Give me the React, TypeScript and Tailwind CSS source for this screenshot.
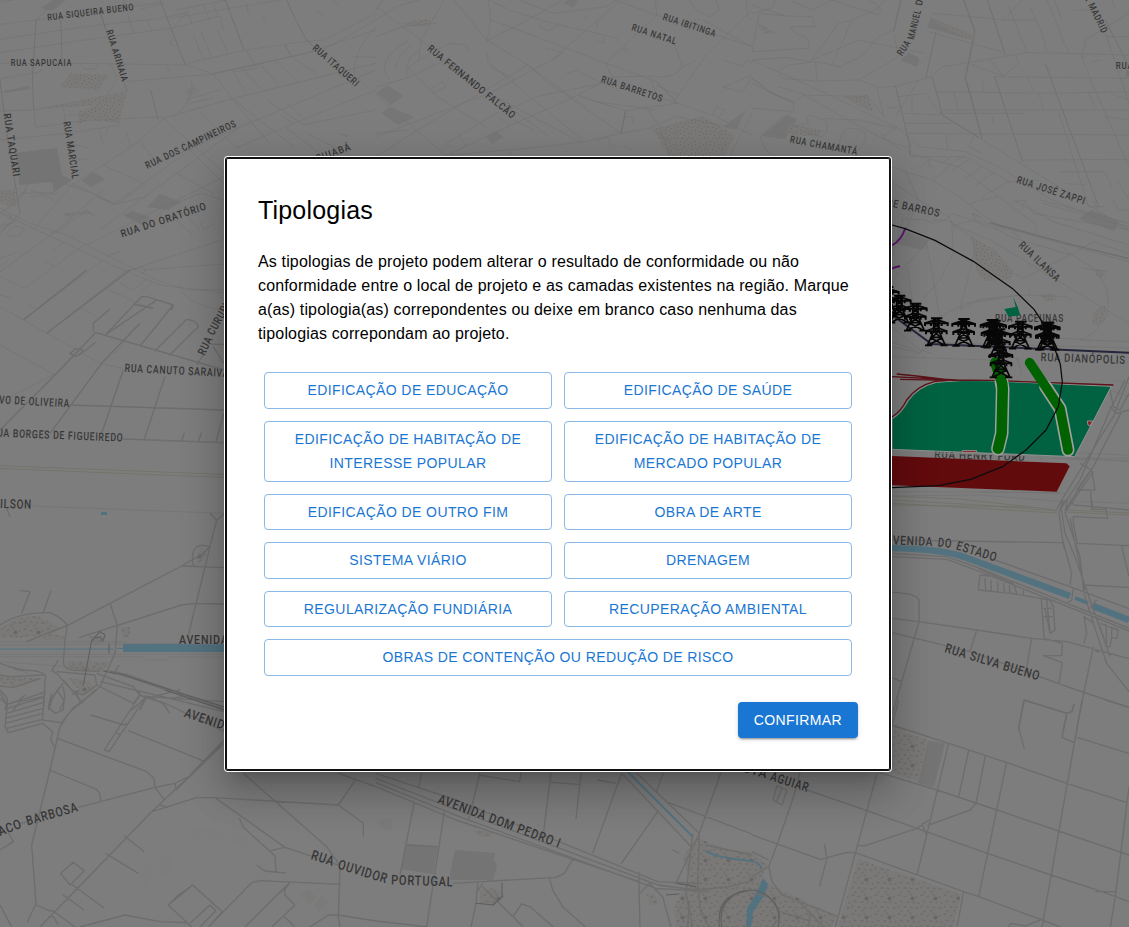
import React from "react";

type Sector = { x: number; y: number; thin?: string; road?: string; bold?: string };

/* Street geometry, drawn per map tile at three units to the pixel. */
const sectors: Sector[] = [
  {
    x: 0,
    y: 0,
    thin:
      "M0 73L108 60L300 34L480 8 M108 60L172 0 M0 118L240 82L480 55L560 38 M0 158L220 125L400 100L520 84L660 48 M0 190L240 190L560 195L640 222L960 150 M0 236L110 218L130 210 M0 333L105 330L380 275 M380 245L640 222 M320 190L340 205L350 240L322 283 M240 190L256 208L290 206L292 192 M105 330L103 360L108 382L250 362L490 350 M0 420L200 400L360 375 M190 320L200 400L212 430L264 444 M200 345L270 345 M208 476L262 478 M298 390L310 433 M326 382L318 404 M380 400L392 440 M420 422L490 355L700 295L1128 190 M0 5L40 0 M370 0L402 102 M440 60L456 94 M415 30L490 10 M300 34L318 92 M520 84L560 38 M515 115L510 132L522 138 M500 195L510 215 M530 30L680 0 M560 30L575 70 M610 15L628 62 M640 10L655 50 M510 55L900 -10 M580 105L612 180 M604 96L634 170 M652 88L684 160 M660 48L670 88 M560 190L740 150L910 125 M640 220L900 165L1128 90 M640 222L760 375L810 430 M696 212L738 276 M730 206L782 266 M780 192L836 254 M828 184L896 248 M880 174L950 220 M575 242Q585 290 540 335L520 355 M560 298L660 270 M565 310L640 294 M575 330L600 320 M490 355L720 560 M600 335L710 444 M696 295L880 440 M740 150L770 205L700 215 M420 422L470 490 M470 490L700 390L1128 210 M310 495L420 422 M310 495L430 550 M530 520L720 380 M640 580L530 520 M530 520L298 690 M560 440L680 560 M800 300L910 374 M860 310L910 352 M840 345L880 370 M710 444L870 375L1128 270 M860 385L960 460 M920 400L1050 465 M910 374L1128 330 M950 30L970 52 M1000 0L1020 20 M910 125L970 120L1128 40 M970 150L1128 60 M1128 80Q1060 150 1062 220L1100 260 M1060 170L1128 172 M790 50L796 70 M740 10L745 40 M900 -10L1128 -20 M160 540L280 580L340 612L430 550L640 400 M0 640L60 600L90 540L160 540 M60 580L160 578 M90 590Q140 580 165 605 M100 690L210 560L310 495 M215 550L345 612L440 590 M190 640L215 650L200 670 M200 640L275 640 M240 650L260 630L285 650 M430 690L500 620L600 580L672 600 M560 650L600 690 M0 680L35 650L10 640 M0 690L50 660",
    road:
      "M108 60L104 130L97 240L101 330 M182 40L186 180 M300 34L345 170L382 275 M480 0L556 195 M676 0L732 150 M452 270L474 358 M860 0L885 55L918 118L945 145 M0 240L20 400L60 640L0 700 M855 135L875 170",
  },
  {
    x: 376,
    y: 0,
    thin:
      "M0 20L140 125L232 205L455 362L520 410 M205 0L135 120L128 180L95 205L185 290L335 385 M234 0L330 118L455 195L630 322 M340 0L400 30L530 70L728 115 M345 60L440 95L690 190L842 245 M336 0Q352 60 332 122 M332 122L455 60L560 0 M128 180L220 130L272 135L280 160 M0 110L80 80L180 70 M0 60L60 20L130 0 M20 0L0 30 M0 260L92 235L220 175 M92 235Q85 170 130 150 M40 240Q-5 180 96 122 M60 210Q60 160 110 135 M430 0L530 40L690 20L720 0L840 45L1128 140 M530 178L728 5 M530 178L480 205L340 280L0 410 M500 65L490 82L520 93L550 70 M620 60L640 45 M660 85L665 65 M690 190L842 45L838 0 M690 190L700 215L710 232L820 228Q900 240 920 200L890 120 M680 110L685 130L665 120 M510 145L560 158L530 180 M570 220L605 210L640 232L730 270 M710 232L585 295L340 405L165 490 M820 228L845 290L905 310 M890 310L990 165L1128 30 M905 310L1020 350L1128 405 M610 285L660 305L840 330 M840 255L905 285 M610 290L750 332L900 310 M750 332L735 400L625 425L455 445L220 465 M735 400L520 250L455 195L380 240L140 380L0 470 M735 400L820 385L900 350L1060 380 M808 318L848 375L880 460 M820 385L880 425 M748 332L745 352L768 350L770 368 M335 158L335 185L480 305L625 425 M0 285L340 580 M340 200L420 240 M92 390L0 400 M160 270L200 245L210 260L170 280 M380 340L480 290L580 270L680 250 M365 350L400 375 M465 345L500 370 M415 362L475 390 M340 280L620 430 M210 430L370 335 M245 400L270 440 M400 455L420 480 M660 425L695 410L705 440 M740 440L770 450 M920 200L960 182 M1020 0L1030 30L1000 50L960 30L940 0 M1110 0L1115 50L1128 60 M1040 180L1100 200L1110 180L1128 190 M980 60L1128 140 M960 60L930 95 M1128 230L1100 275L1040 262L1128 225 M1010 345L1020 320L1045 330L1030 352 M1128 340L1060 470",
    road: "M735 400L748 335 M905 310L842 245",
  },
  {
    x: 752,
    y: 0,
    thin:
      "M0 15L100 48L180 50L190 80L115 80L130 100Q180 110 170 145L0 155 M0 155L22 40L100 48 M70 0L60 25L0 40 M115 0L180 30L240 0L380 45Q400 20 350 0 M178 180L260 70L300 60 M240 195L300 60L370 30L400 0 M180 180L320 120L520 160 M445 0L425 90L380 110L335 165L265 200L190 185L110 195Q70 210 90 235L190 243L320 240L440 170L425 100 M190 185L196 243 M0 180L100 172L178 185 M320 240L380 262L430 260L540 230L570 200L650 188L820 158L930 160L1131 165 M0 250L125 310L158 285L270 350L400 420L470 445 M80 260L158 285L350 290L395 350L375 265 M125 310L125 335L0 325 M0 180L200 270L440 385L500 440L640 455L740 500L900 600L1131 690 M125 335L85 355L25 410L40 450L100 490 M160 340L170 370L110 380 M170 345L220 360Q235 390 210 410L170 400 M220 355L320 360L430 385L390 410 M390 410L450 450 M260 440Q270 380 300 385Q370 390 320 450 M540 40L660 50L753 60L850 60 M530 95L750 155 M635 0L670 100L640 235L690 415 M510 190L460 150 M440 290L520 280L565 340L820 340 M460 340L565 345 M460 370L600 370 M480 290L480 330 M405 325L440 320 M470 400L1131 405 M550 275L880 280L1131 275 M570 330L1131 330 M605 275L618 330 M650 190L690 205L755 228L800 190L790 165 M710 175L755 228 M690 235L695 275 M728 230L1131 235 M720 350L725 375 M580 400L588 450 M670 400L650 440L690 460 M570 345L1131 690 M810 480L1131 478 M920 515L1060 515 M1000 555L940 550 M825 230L845 275 M860 280L875 330 M920 335L1010 620L1060 620 M753 60L850 -40 M770 20L825 158 M835 20L870 100L885 158 M885 0L950 160 M900 -20L930 60 M963 30L1030 30 M1010 165L990 175L1000 120L1131 40 M985 160L1020 250L1131 500 M1020 185L1050 180 M1060 110L1131 110 M1060 100L1131 310 M1010 275L1030 330 M1060 350L1131 360 M1075 280L1131 300 M1060 520L1080 560 M1095 540L1131 600 M1080 0L1090 30 M460 515L540 540L620 590L700 650L760 690 M420 545L500 600L590 650L610 690 M470 450L475 470L640 470L770 545L860 540 M500 505L530 480L535 505 M545 540L610 480L640 470 M570 490L600 470 M600 510L650 480 M640 535L690 500 M670 555L730 515 M690 590L770 545 M740 590L690 600L650 612 M470 460L620 500L740 590L860 680 M790 605L820 600L810 625 M870 610L1131 680 M420 500L460 515L500 600L460 690 M540 660L580 660L600 640L740 690 M670 655L660 640L690 655 M500 240L430 350",
    road:
      "M552 95L522 232 M430 256L474 440 M540 230L560 300L570 345L680 412 M728 230L812 485 M635 0L668 90L640 235L660 300L690 415 M0 235L60 280L125 305 M880 190L920 300L1040 620 M706 0L760 165 M450 -10L425 95 M1131 200L1060 60 M474 430L474 462",
  },
  {
    x: 880,
    y: 200,
    thin:
      "M80 60L100 10 M36 170L70 55L130 60L160 70L200 60L225 75L285 60L747 185 M225 75L330 120L747 370 M285 60L280 40L300 50 M215 60L220 160L180 240L100 330 M140 130L180 350L260 310L420 285L560 290L580 305 M140 130L36 240 M80 200L100 320 M220 75L275 110L285 150L240 330 M340 80L390 110L570 165L430 235L400 220L380 205 M390 95L420 110 M570 160L640 205Q700 260 680 350L640 400L600 420L747 425 M400 0L520 65L747 135 M440 10L460 40L747 90 M480 0L747 70 M470 85L460 105 M450 262L445 285 M640 0L655 35 M700 0L715 30L747 30 M610 205L660 210L680 240 M550 140L570 165L640 125L747 160 M500 280L530 290 M36 380L120 450L160 462 M130 440L120 462 M240 330L290 300L420 285 M540 415L640 420 M30 470L330 480",
    road: "M747 176L560 130L330 68",
  },
  {
    x: 880,
    y: 340,
    thin:
      "M36 20L120 38L160 8L747 24 M36 8L100 25 M120 38L100 48 M410 50L420 80L425 105 M400 55L420 58 M690 150L747 170 M36 455L540 458 M36 468L300 465L550 485 M700 120L747 130 M560 350L747 365 M0 310L747 346 M480 350L484 362 M510 355L747 355 M560 358L747 362 M570 470L590 485L747 490 M300 455L560 460",
    road:
      "M747 110L700 230L545 480L530 510 M735 120L690 210L600 420L540 510 M690 150L700 200L720 210L747 160 M725 215L640 380L555 510 M600 370L635 390L645 450L590 450L640 380 M632 455L635 510 M690 200L710 220L747 210 M640 395L560 510",
  },
  {
    x: 880,
    y: 500,
    road:
      "M555 0L543 20L555 100L585 170L630 300L690 470 M562 0L555 40L600 170L612 280L640 370L680 490L747 575 M548 0L537 40L548 120L575 220L570 255 M570 55L615 270 M580 70L580 50L683 55L678 28L640 28L635 0 M570 0L582 15L640 20L747 30 M580 70L592 130L747 137 M36 120L548 128L555 150 M725 137L747 230 M612 255L747 262 M36 160L200 170L300 205L747 385 M36 170L200 178L300 215L747 393 M345 180L570 260L747 326 M300 225L295 270L395 280L480 295L510 300L520 320L525 390L510 400L495 325 M300 225L350 230L400 250L412 285 M315 235L317 270 M333 240L334 272 M352 245L354 276 M370 250L374 278 M388 255L390 280 M295 205L350 230 M430 270L430 285 M484 295L492 415L547 430L545 467L490 467L547 488L536 555 M490 325L515 325 M490 350L518 350 M500 300L510 395 M36 277Q110 280 117 300L117 365 M36 355L117 365L290 390L455 415L560 425L747 476 M36 398L270 455L590 570L747 622 M117 365L65 545L36 645 M290 390L270 455 M455 415L436 525 M640 440L612 575L590 690 M36 533L65 545 M612 430L620 400L612 350L640 370 M660 370L715 390L710 415L695 412L690 440L680 440L660 380 M678 373L680 435 M695 385L695 412 M415 690L433 600L560 640L550 690 M560 640L575 635L582 612 M36 678L80 690 M580 265L575 300L560 310 M650 300L630 325 M645 452L657 457",
  },
  {
    x: 0,
    y: 190,
    thin:
      "M0 55L90 100L200 135L470 270L560 300L672 298 M0 70L100 115L380 245L480 285L672 308 M0 110L40 95L30 80 M20 130L45 108L75 115L55 140L20 135 M0 205L45 190 M0 230L25 210 M90 0L140 15L180 10 M80 0L0 70 M0 245L160 130L310 0 M260 165L672 -40 M70 390L310 210 M75 295L250 165 M140 430L380 240 M160 180L195 155 M130 215L165 228 M210 145L225 130 M320 200L360 183 M380 245L430 230L435 245L425 250 M430 240L672 222 M390 240L672 148 M360 280L400 300L440 268 M420 307L455 280 M315 295L450 355L470 330 M550 305Q560 340 672 362 M0 350L300 520L370 535 M0 465L165 555 M80 340L110 357 M240 352L290 380 M290 20L345 45L440 -20 M190 70L205 80L190 95 M195 75L225 75 M150 128L170 128L255 62L285 78 M530 90L560 120L578 130 M600 95L610 118L645 100 M0 260L75 295 M0 315L35 325 M0 640L30 620L160 555 M345 490L370 465",
    road:
      "M70 390L260 240 M140 430L390 240 M318 433L425 320L440 320L520 345L420 468 M400 342L460 355 M520 345L515 360 M465 482L560 388Q590 390 595 410L507 497 M280 425L280 400L330 357 M285 427L672 540 M318 433L470 330 M0 720L165 555L285 430 M150 730L305 520L420 400 M305 730L370 540 M432 750L495 560 M545 753L553 728 M596 755L604 727 M648 755L672 670 M208 645L672 660 M370 747L672 758 M250 487L287 457 M210 490L230 475L248 480L245 490L225 500Z M590 525L610 495 M635 463L672 463 M672 520L640 470",
  },
  {
    x: 0,
    y: 440,
    thin:
      "M0 605L380 605 M0 615L540 610 M0 643L672 643 M0 650L430 650L440 660L500 660L508 650L672 652 M0 665L200 680L330 693 M75 605L200 555 M95 198L672 220 M430 0L672 8 M545 0L545 -10",
    road:
      "M20 205L30 230 M60 452L90 455L65 520 M153 452L130 517 M0 555Q60 515 150 518Q190 535 202 557L195 600L190 665Q190 685 215 690L300 695 M80 605L202 557L330 490L545 378L610 340L630 320 M237 593L545 495L587 490L672 492 M565 585L630 320L650 240L672 222 M630 220L650 240 M545 378L672 383 M628 320Q580 305 578 350Q575 380 590 380 M330 490L352 557L345 640L300 740L213 810 M175 660L155 692L170 700L250 790 M170 695L285 705L290 735L250 765L220 755L190 720 M0 670L60 690Q150 690 135 720L130 810 M0 705L30 710L130 705 M0 738L40 742L120 715 M145 810L160 770L180 740 M190 730L150 780L148 810 M0 760L20 790L15 810 M40 810L60 785L130 770 M190 740L195 775L180 810 M290 735L400 790L420 765L400 740L290 700 M340 705L357 675 M420 810L440 770L672 785 M330 693L380 703L672 805 M355 700L672 810 M300 725L672 815 M440 770L395 810 M480 768L510 775L550 770",
    bold: "M310 693L370 705L672 800 M300 575L275 602L250 735 M285 595L300 590L310 605 M300 575L315 585L310 600 M327 613L327 640",
  },
  {
    x: 0,
    y: 690,
    road:
      "M0 25L22 45L15 110L25 128L128 100L158 125L152 150L163 170 M15 100L130 70 M20 115L128 88 M15 85L130 55 M20 70L130 38 M22 55L130 22 M25 42L130 8 M0 0L22 25L22 45 M135 0L127 90L185 98L210 65 M170 0L192 30L190 60L165 70L145 50L155 10 M225 0L240 35 M290 0L210 65L180 110L150 240L95 465L108 640 M240 0L215 15 M50 35L75 15 M420 15L313 180L327 185L435 25L540 0 M410 0L425 18L450 20L490 42L510 70 M425 18L500 42L672 125 M272 75L372 105L380 100 M350 130L360 133 M385 122L615 215 M172 145L440 245L462 265L465 292L492 328 M148 240L290 298L300 312L302 335 M235 352L465 292L525 280L575 255L672 150 M525 280L528 300L672 160 M610 215L640 185L672 160 M672 150L575 250 M672 160L455 365L120 711 M455 365L590 323L645 323L1015 345L1065 272 M480 345L505 353 M645 323L855 472L1020 527L1015 680L1020 711 M730 250L980 470L1020 527 M1015 345L1090 400L1090 440 M718 385L730 412L825 498L828 545 M812 482L855 472 M770 525L795 543L857 549 M372 437L433 485 M317 490L415 550 M253 542L220 517L182 550L210 585L253 542 M215 583L313 655 M187 613L252 660 M155 660L225 711 M108 640L82 697 M108 645L155 665 M0 645L35 711 M145 680L160 680L175 705 M240 711L375 675L480 695L560 698 M505 645L578 585L667 665L625 711 M505 645L575 711 M505 645L535 615L578 585 M570 700L630 645L647 662L600 711 M625 711L755 578L780 572L1022 583 M735 711L872 575L853 600L855 615L885 645L815 711 M853 680L885 711 M1015 675L1128 693 M930 711L985 675L1015 675 M0 480L40 455L20 420 M60 400L90 395 M1015 250L1128 290",
    bold: "M495 0L672 60",
  },
  {
    x: 376,
    y: 750,
    road:
      "M0 70L240 150L845 395L970 400 M0 85L230 175L845 405L960 420L1060 410L1128 392 M0 98L250 200L840 415L1000 425 M0 110L240 210L790 395 M137 67L128 115 M115 155L72 375 M205 185L152 530 M93 285L185 290 M312 67L278 210 M310 75L430 95L436 67 M525 67L503 245 M525 97L608 103 M615 67L600 207 M663 90L720 100 M738 67L650 310 M845 185L735 342 M862 67L840 130 M735 67L950 295 M780 67L970 250 M870 155L1128 252 M1035 67L970 250L900 400 M970 250L965 410L975 490L1000 531 M950 250L930 430L950 531 M788 365L792 531 M792 430L820 400L860 440L885 531 M230 400L540 382L565 370L590 328 M520 385L530 420L560 470L628 531 M305 400L300 460L285 531 M320 400L300 430 M320 410L442 531 M412 498L437 462L462 470L532 531 M0 513L155 531 M895 400L955 408L962 420 M890 300L910 310 M990 285L1128 315 M940 450L935 531 M1030 490Q1035 430 1128 422",
    bold: "M378 398L378 440L352 465L300 460 M870 435L910 432 M905 400L960 410 M1030 531Q1020 440 1110 422",
  },
  {
    x: 752,
    y: 700,
    road:
      "M440 0L420 75 M420 75L590 130L765 188L945 250L1125 308 M815 0L945 40L960 35L967 12 M815 0L800 85L817 145 M945 40L930 112L967 128 M990 0L870 681 M975 112L1131 160 M1060 0L1131 22 M590 130L495 525 M650 152L620 290 M700 168L672 310L655 330L525 377 M763 190L680 590 M375 220L250 681 M380 217L555 270L735 330L920 393L1131 465 M165 270L345 332L495 385L706 460L897 525L1050 575L1131 605 M315 437L340 437L495 385L530 360 M510 370L525 410 M0 405L205 478L285 457L310 458L635 575L680 590L870 660L925 681 M217 433L225 475L202 560 M635 575L615 681 M145 215L128 280L75 435L50 500L0 530 M50 500L60 545L90 585L255 648 M0 580L50 590L80 625L85 650L60 681 M85 635L170 662 M145 610L215 681 M175 640L170 681 M75 257L63 300L90 315L105 270L75 257 M90 265L73 305 M1131 260L1090 590L1075 681 M1030 575L1090 575 M770 681L775 670L820 678L870 658 M0 455L50 480",
  },
];

const grounds: [string, string][] = [
  ["M18 165L15 153L57 148L62 175L72 180L54 192L52 182L19 185Z", "#747474"],
  ["M4 91L29 86L30 89L4 93Z M82 181L93 172L105 179L91 187Z M147 207L160 194L181 202L168 210Z M123 215L132 211L150 217L144 226Z M41 8L53 0L66 0L52 11Z", "#757575"],
  ["M376 93L388 85L403 96L391 105Z M381 113L390 107L414 117L398 125Z M486 137L497 131L503 137L492 144Z M563 3L567 0L578 0L573 8Z M723 127L746 110L736 130Z M337 133L350 135L347 137Z", "#767676"],
  ["M762 136L787 115L797 119L785 139Z M927 27L931 18L972 34L971 40Z M900 60L909 53L919 58L917 67Z M1079 219L1091 210L1119 221L1114 231Z M897 244L907 232L929 240L922 250Z", "#757575"],
  ["M450 873L455 850L495 853L494 860L497 866L493 880L450 880Z M401 869L407 844L438 847L433 874Z M918 783L928 741L945 743L934 787Z M1126 70H1129V77H1126Z", "#747474"],
  ["M184 91L194 85L200 91L189 96Z M300 895L308 889L316 897L309 904Z M314 905L322 896L329 902L319 911Z M378 822L382 818L393 820L391 831L380 828Z M620 50L627 47L628 54Z", "#7a7a78"],
];

const parks = [
  "M60 87L70 73L108 75L98 90Z M45 108L98 98L127 93L122 109L120 123L90 120L79 124L78 112L98 105L46 109Z",
  "M0 190L15 190L16 207L0 203Z M402 24L411 21L429 19L432 24L423 27Z",
  "M654 129L702 116L735 135L724 156H668Z",
  "M843 96L868 95L873 112L860 107Z M787 134L788 123L822 130L818 137Z M758 23L776 33L764 34Z M930 19L972 34L971 40L948 30Z",
  "M971 236L995 250L1013 271L1010 280L985 281L977 272Z M1040 295L1050 294L1057 300L1047 302Z M1093 315L1098 308L1106 305L1104 322L1097 326L1092 322Z M1093 269L1107 271L1099 280Z",
  "M0 630Q14 615 38 616L60 628L52 634L20 638L0 638Z M38 640L50 633L66 637L64 640Z M65 663L70 661L110 662L102 671L72 669Z M68 678L90 681L95 691L83 695Z M0 675L42 679L20 687L0 683Z M121 627L130 627L129 638L122 638Z M5 666L24 668L28 674Z",
  "M892 728L927 740L918 781L892 773Z M858 859L961 894L953 927H838Z",
  "M696 838L727 849L752 852L768 865L760 880L837 916L832 927H676L675 905L690 880L683 857Z M646 893L656 896L659 905L650 905Z M480 890L493 888L505 893L503 899L493 905L480 904Z M474 831L492 832L492 837L480 837Z",
  "M200 545L207 555L196 567Z M88 635L100 637L103 642L95 645Z",
];

type Label = [string, number, number, number, number, number];

const labels: Label[] = [
  ["RUA SIQUEIRA BUENO", 47.7, 20.7, 134, 10, 9.6],
  ["RUA ARINAIA", 106, 31, 122, 82, 9.6],
  ["RUA SAPUCAIA", 10.7, 66, 71.7, 66, 9.6],
  ["RUA TAQUARI", 3.5, 114, 13.3, 177, 10.2],
  ["RUA MARCIAL", 63.3, 122, 72.3, 179.5, 10],
  ["RUA DOS CAMPINEIROS", 147.3, 169, 237, 126, 10],
  ["RUA ITAQUERI", 312, 49, 355.5, 87, 9.8],
  ["CUIABÁ", 317, 162, 351.5, 149.5, 10],
  ["RUA DO ORATÓRIO", 122, 237.5, 207, 209.3, 10.6],
  ["RUA FERNANDO FALCÃO", 426.7, 49.8, 512, 119, 10.2],
  ["RUA IBITINGA", 662.3, 19.5, 714.8, 37, 9.6],
  ["RUA NATAL", 631, 30, 675.5, 44.7, 9.6],
  ["RUA BARRETOS", 600.6, 82, 661.5, 102, 9.8],
  ["RUA", 902, 56.5, 911, 43, 9.8],
  ["MANUEL", 914, 40, 921, 11, 9.8],
  ["DE", 922, 6, 924, -6, 9.8],
  ["MADRID", 1088, 5, 1102, 34, 9.8],
  ["A", 1083, -5, 1086.5, 2, 9.8],
  ["RUA", 1115.7, 69, 1133, 69, 9.6],
  ["RUA CHAMANTÁ", 789.6, 142.5, 856.7, 155, 10],
  ["RUA JOSÉ ZAPPI", 1016, 182.7, 1084, 204.5, 10.4],
  ["DE BARROS", 886, 205.5, 939, 217, 10.8],
  ["RUA ILANSA", 1018, 246, 1056, 282, 10.6],
  ["RUA PACEUNAS", 995, 322, 1063.5, 322, 11],
  ["RUA DIANÓPOLIS", 1040.5, 361, 1125, 364, 11.6],
  ["RUA HENRY FORD", 934.3, 458, 1025, 461, 11],
  ["RUA", 204.5, 356, 212.5, 339, 11.4],
  ["CURURU", 213.5, 336, 232, 303, 11.4],
  ["RUA CANUTO SARAIVA", 124.5, 371.8, 228.3, 377, 11.4],
  ["VO DE OLIVEIRA", -1, 403.5, 69, 407.2, 11.4],
  ["UA BORGES DE FIGUEIREDO", -3, 436.6, 122.7, 441.6, 11.4],
  ["ILSON", 0, 508, 31.3, 508.8, 12.8],
  ["AVENIDA", 179, 644, 228, 644, 12.6],
  ["AVENIDA", 183.5, 716.5, 230, 732, 13],
  ["ACO", 0, 836, 22.3, 827.5, 13.2],
  ["BARBOSA", 27.5, 825.5, 78.5, 811, 13.2],
  ["RUA", 310.3, 859, 332.3, 866, 13.6],
  ["OUVIDOR", 337, 868.5, 385.7, 883.3, 13.6],
  ["PORTUGAL", 391, 884.5, 452.7, 886.5, 13.6],
  ["AVENIDA DOM PEDRO I", 437, 802.7, 558.5, 848, 13.4],
  ["AVENIDA", 885.5, 544.2, 932.5, 546, 12.6],
  ["DO", 937.5, 546.6, 951, 548, 12.6],
  ["ESTADO", 955.5, 549.3, 995.3, 561.5, 12.6],
  ["RUA SILVA BUENO", 944, 652, 1038, 680.5, 13],
  ["STA", 742, 771.5, 766, 778.5, 12.8],
  ["AGUIAR", 769.5, 780, 807, 792, 12.8],
];

const towers: [number, number][] = [
  [-14, 258], [22, 284], [70, 308], [133, 352], [215, 354], [300, 357],
  [308, 359], [322, 385], [327, 448], [385, 362], [463, 365], [469, 365],
];

function MapLabel({ label }: { label: Label }) {
  const [text, x1, y1, x2, y2, size] = label;
  const angle = (Math.atan2(y2 - y1, x2 - x1) * 180) / Math.PI;
  return (
    <text
      transform={`translate(${x1} ${y1}) rotate(${angle})`}
      fontSize={size}
      textLength={Math.hypot(x2 - x1, y2 - y1) + size * 0.05}
      lengthAdjust="spacingAndGlyphs"
    >
      {text}
    </text>
  );
}

function StreetMap() {
  return (
    <svg className="block h-full w-full bg-[#7d7d7d]" viewBox="0 0 1129 927" aria-hidden="true">
      <defs>
        <pattern id="park" width="23" height="19" patternUnits="userSpaceOnUse">
          <rect width="23" height="19" fill="#7a7977" />
          <path
            d="M1 2h2M7 4l2-1M13 1l1 1M19 4h1M3 8l2 1M10 9h2M16 10l1-1M21 10h1M1 14l1-1M7 14h2M13 14l2 1M19 15h2M4 18h1M11 18l1-1"
            stroke="#6d6c6b"
            strokeWidth="1.3"
            strokeLinecap="round"
          />
          <circle cx="15.5" cy="5.5" r="2.1" fill="#686766" />
        </pattern>
        <pattern id="park-fine" width="15" height="11" patternUnits="userSpaceOnUse">
          <rect width="15" height="11" fill="#7a7977" />
          <path d="M1 2.5h1M5 1.5h1M9 3.5h1M13 1.5h1M2 6.5h1M7 6.5h1M11 7.5h1M14 5.5h1M1 10.5h1M5 9.5h1M9 10.5h1" stroke="#6a6968" />
        </pattern>
        <pattern id="hatch" width="3" height="6" patternUnits="userSpaceOnUse">
          <path d="M1 0V6" stroke="#797979" />
        </pattern>
        <g id="tower" fill="none" stroke="#070707">
          <path
            d="M20 3H54M0 18H72M3 42H69M2 18V26M20 18V26M52 18V26M70 18V26M5 42V51M20 42V51M52 42V51M67 42V51"
            strokeWidth="6"
          />
          <path
            d="M28 2V42L9 84M44 2V42L63 84M28 2L44 18L28 30L44 42L20 62L58 82M44 2L28 18L44 30L28 42L52 62L14 82M0 18L28 9L44 9L72 18M3 42L28 33H44L69 42M20 60H52M2 84H24M48 84H70"
            strokeWidth="5"
          />
        </g>
      </defs>

      {grounds.map(([d, fill]) => (
        <path key={d} d={d} fill={fill} />
      ))}
      {parks.map((d, i) => (
        <path key={d} d={d} fill={i < 5 ? "url(#park-fine)" : "url(#park)"} />
      ))}
      <path
        d="M185 837Q195 824 215 827Q240 828 254 843L246 850L226 840L205 841Z M126 893Q135 888 143 870Q155 850 174 858L172 872L150 880L141 896Z M248 872L257 872L266 885L254 884Z"
        fill="url(#hatch)"
      />

      <g fill="none" stroke="#537280">
        <path d="M123 648H226" strokeWidth="8" />
        <path d="M890 548Q945 549 967 558L1070 596M1093 606L1129 620" strokeWidth="6.5" />
        <path d="M1075 598L1088 603" strokeWidth="4" />
        <path d="M0 649H113M117 648.5H123" strokeWidth="1" />
        <path d="M625 769L693 837" strokeWidth="1.8" />
        <path d="M706 851Q716 858 752 861Q762 864 761 869" strokeWidth="1.8" />
        <path d="M101 513.5H107" strokeWidth="3" />
      </g>
      <path d="M763 878L768 884L764 896L753 912L751 927H746L747 908Q753 900 758 890Z" fill="#537280" />

      <path
        d="M0 465.7L226 474.5M0 468.5L226 477.5M890 496L960 499L1057 510M890 500L980 505L1057 511M890 503L1057 513M1066 510L1129 513M1066 512L1129 515M890 505L1030 507"
        fill="none"
        stroke="#707063"
        strokeWidth="0.7"
      />

      {sectors.map((s) => (
        <g
          key={`${s.x}-${s.y}`}
          transform={`translate(${s.x} ${s.y}) scale(0.33333)`}
          fill="none"
          strokeLinejoin="round"
        >
          {s.thin && <path d={s.thin} stroke="#727272" strokeWidth="1.9" />}
          {s.road && <path d={s.road} stroke="#6d6d6d" strokeWidth={s.y === 0 ? 2.4 : 4} />}
          {s.bold && <path d={s.bold} stroke="#5e5e5e" strokeWidth="3.2" />}
        </g>
      ))}
      <circle cx="750" cy="919" r="29" fill="none" stroke="#606060" strokeWidth="1.2" />

      <g
        className="font-[Roboto,sans-serif] font-medium tracking-[0.06em]"
        fill="#373737"
        stroke="#7d7d7d"
        strokeWidth="0.8"
        paintOrder="stroke"
      >
        {labels.map((label) => (
          <MapLabel key={label.slice(0, 3).join()} label={label} />
        ))}
      </g>

      <g transform="translate(880 340) scale(0.33333)" strokeLinejoin="round">
        <path d="M160 338H440V349L160 340Z" fill="#7d7d7d" />
        <path
          d="M36 237Q65 220 85 182Q115 140 170 127Q240 119 320 122L694 139L584 350L36 328Z"
          fill="#006241"
          stroke="#929292"
          strokeWidth="3"
        />
        <path d="M36 348L559 370L569 379L530 455L36 436Z" fill="#620b0d" />
        <g fill="none" stroke="#5b1218" strokeWidth="4">
          <path d="M36 231Q65 212 80 180Q110 138 165 124L220 120M50 102L110 108L210 120L330 121L700 135M36 110L230 120M60 118L220 121" />
        </g>
        <path d="M622 243L638 243L630 258L624 255Z M247 332H290V338H247Z" fill="#8b1a1c" stroke="#929292" strokeWidth="3" />
        <g fill="none" strokeLinecap="round" strokeLinejoin="round">
          <path d="M364 125L368 145L365 280L354 326" stroke="#a0a0a0" strokeWidth="41" />
          <path d="M497 140L540 205L564 330" stroke="#a0a0a0" strokeWidth="39" />
          <path d="M346 68L366 128L368 145L365 280L354 326" stroke="#006200" strokeWidth="32" />
          <path d="M449 68L540 205L564 330" stroke="#006200" strokeWidth="29" />
        </g>
      </g>

      <g transform="translate(880 200) scale(0.33333)" fill="none">
        <path d="M373 327L407 321L400 292L414 323L421 346L386 350Z" fill="#006241" />
        <path d="M36 136Q65 120 76 84M36 206Q48 200 60 199" stroke="#5d186f" strokeWidth="6" />
        <path d="M36 345L155 432L747 458" stroke="#25253a" strokeWidth="6" />
        <path
          d="M36 75L75 86L165 121L280 184L398 266L462 328L500 385L522 440L541 493L547 546L535 620L498 690L438 750L368 800L272 838L175 857L36 863"
          stroke="#0c0c0c"
          strokeWidth="3.8"
        />
        {towers.map(([x, y]) => (
          <use key={`${x}-${y}`} href="#tower" x={x} y={y} />
        ))}
      </g>
    </svg>
  );
}

const options = [
  "Edificação de Educação",
  "Edificação de Saúde",
  "Edificação de Habitação de Interesse Popular",
  "Edificação de Habitação de Mercado Popular",
  "Edificação de Outro Fim",
  "Obra de Arte",
  "Sistema Viário",
  "Drenagem",
  "Regularização Fundiária",
  "Recuperação Ambiental",
  "Obras de contenção ou redução de risco",
];

export default function App() {
  return (
    <main className="relative h-[927px] w-[1129px] overflow-hidden font-['Liberation_Sans',Arial,sans-serif]">
      <StreetMap />
      <div className="absolute inset-0 flex items-start pt-[158px] pl-[226px]">
        <section
          role="dialog"
          aria-modal="true"
          aria-labelledby="dialog-title"
          className="flex h-[612px] w-[664px] flex-col rounded-[2px] bg-white p-8 text-black shadow-[inset_0_0_0_1px_#101010,0_0_0_1px_#101010,0_0_0_2px_#ffffff,0_11px_15px_-7px_rgba(0,0,0,0.2),0_24px_38px_3px_rgba(0,0,0,0.14),0_9px_46px_8px_rgba(0,0,0,0.12)]"
        >
          <h2 id="dialog-title" className="h-[60px] text-[25px] leading-[40px] tracking-[0.19px]">
            Tipologias
          </h2>
          <p className="text-[16px] leading-6 tracking-[0.15px]">
            As tipologias de projeto podem alterar o resultado de conformidade ou não conformidade entre o local de
            projeto e as camadas existentes na região. Marque a(as) tipologia(as) correpondentes ou deixe em branco caso
            nenhuma das tipologias correpondam ao projeto.
          </p>
          <div className="mt-[26px] grid grid-cols-2 gap-3 px-1.5">
            {options.map((option) => (
              <button
                key={option}
                type="button"
                className="rounded border border-[#1976d2]/50 px-[15px] py-[5px] text-[14px] leading-[24.5px] tracking-[0.4px] text-[#1976d2] uppercase last:col-span-2"
              >
                {option}
              </button>
            ))}
          </div>
          <button
            type="button"
            className="mt-[26px] self-end rounded bg-[#1976d2] px-4 py-1.5 text-[14px] leading-[24.5px] tracking-[0.4px] text-white uppercase shadow-[0_3px_1px_-2px_rgba(0,0,0,0.2),0_2px_2px_0_rgba(0,0,0,0.14),0_1px_5px_0_rgba(0,0,0,0.12)]"
          >
            Confirmar
          </button>
        </section>
      </div>
    </main>
  );
}
